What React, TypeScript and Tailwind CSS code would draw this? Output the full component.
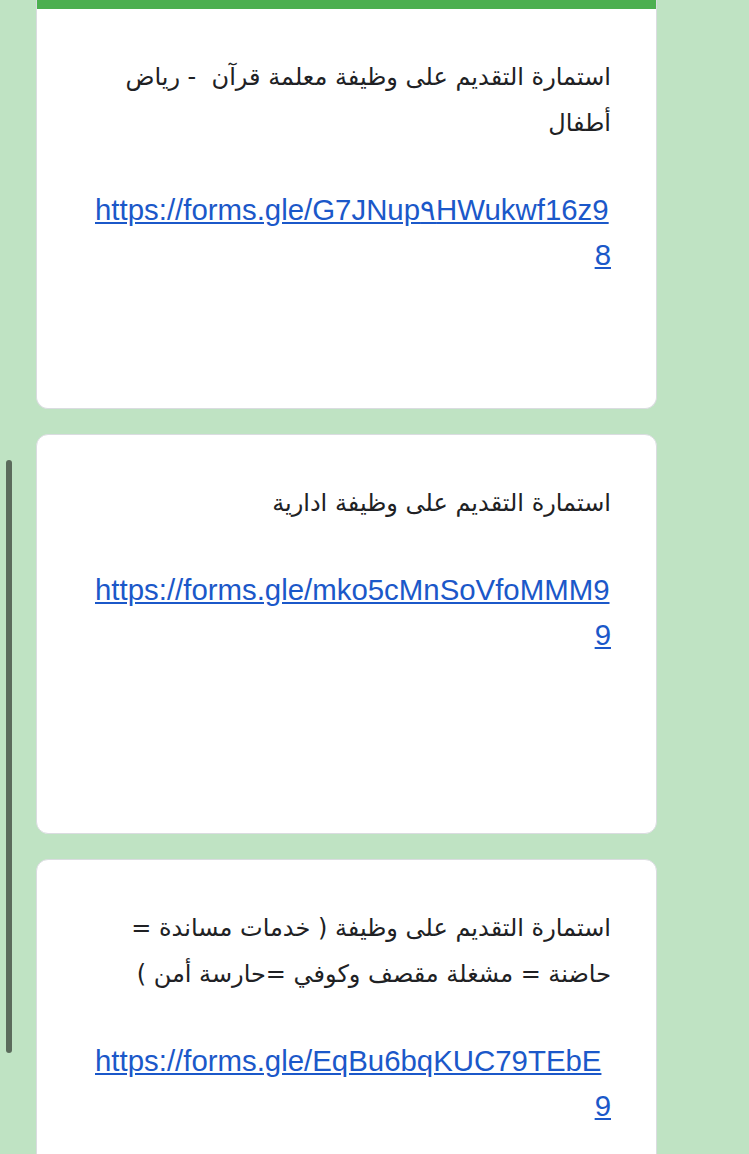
import React from 'react';

type Job = {
  lines: string[];
  url: string;
  bar?: boolean;
};

const jobs: Job[] = [
  {
    lines: ['استمارة التقديم على وظيفة معلمة قرآن  - رياض', 'أطفال'],
    url: 'https://forms.gle/G7JNup٩HWukwf16z98',
    bar: true,
  },
  {
    lines: ['استمارة التقديم على وظيفة ادارية'],
    url: 'https://forms.gle/mko5cMnSoVfoMMM99',
  },
  {
    lines: ['استمارة التقديم على وظيفة ( خدمات مساندة =', 'حاضنة = مشغلة مقصف وكوفي =حارسة أمن )'],
    url: 'https://forms.gle/EqBu6bqKUC79TEbE9',
  },
];

const JobCard: React.FC<{ job: Job }> = ({ job }) => (
  <div
    className={`bg-white border border-[#dadce0] overflow-hidden ${
      job.bar ? 'h-[409px] rounded-b-xl border-t-0' : 'h-[400px] rounded-xl'
    }`}
  >
    {job.bar && <div className="h-[9px] bg-[#4caf50]" />}
    <div className="pt-[45px] pr-[45px] pl-[58px]">
      <div
        dir="rtl"
        className="text-right text-[#202124] text-[24px] leading-[46px] [font-family:'DejaVu_Sans',sans-serif]"
      >
        {job.lines.map((l, i) => (
          <div key={i} className="whitespace-pre">{l}</div>
        ))}
      </div>
      <div className="h-[41px]" />
      <div
        dir="ltr"
        className="text-left [text-align-last:right] text-[29.4px] leading-[45px] break-all [font-family:'Liberation_Sans',Arial,sans-serif]"
      >
        <a href="#" className="text-[#1b58c9] underline">
          {job.url}
        </a>
      </div>
    </div>
  </div>
);

export default function App() {
  return (
    <div className="relative min-h-[1154px] bg-[#bfe3c3] overflow-hidden">
      <div className="ml-[36px] w-[621px] flex flex-col gap-[25px]">
        {jobs.map((job, i) => (
          <JobCard key={i} job={job} />
        ))}
      </div>
      {/* scroll indicator */}
      <div className="absolute left-[6px] top-[460px] w-[6px] h-[593px] rounded-full bg-[#5b6b5c]" />
    </div>
  );
}
